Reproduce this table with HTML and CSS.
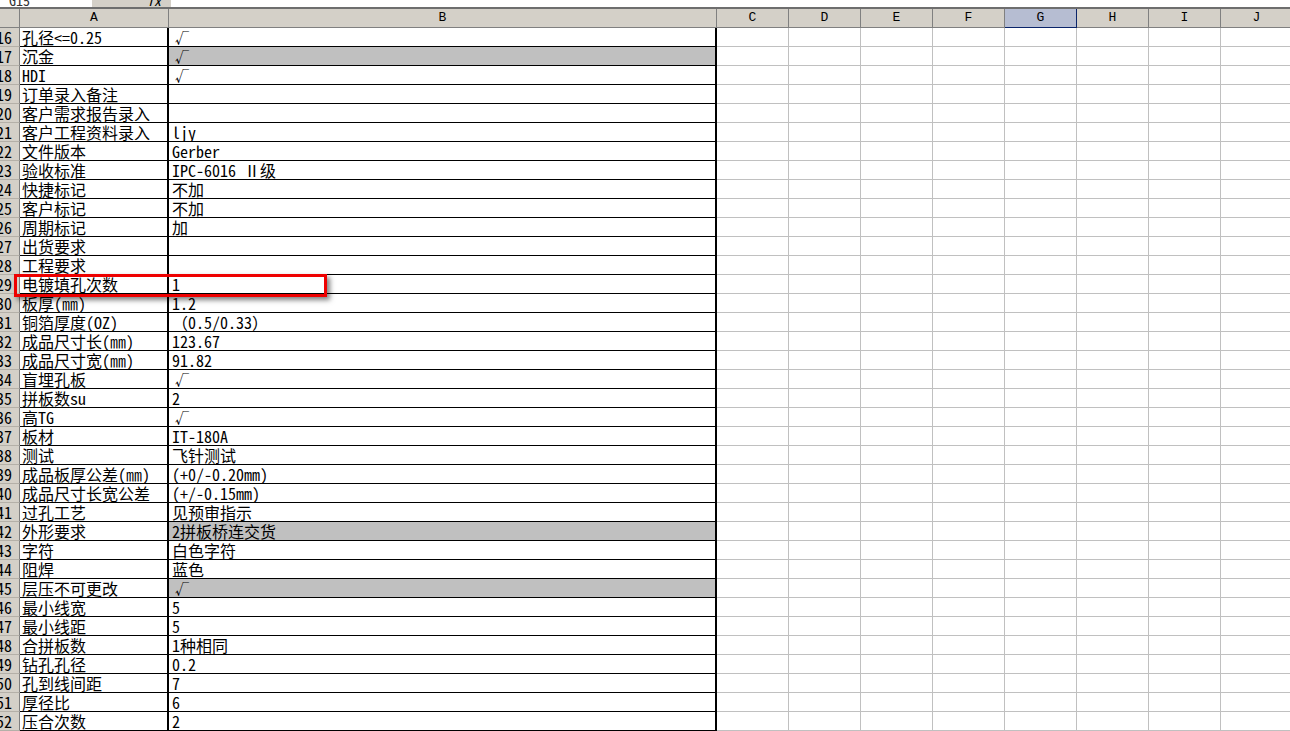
FILE: index.html
```html
<!DOCTYPE html>
<html lang="zh-CN">

<head>
    <meta charset="UTF-8">
    <meta name="viewport" content="width=device-width, initial-scale=1.0">
    <title>Sheet1</title>
    <link rel="stylesheet" href="styles.css">
</head>

<body>
    <div class="formula-bar">
        <div class="formula-bar__name">G15</div>
        <div class="formula-bar__fx">fx</div>
    </div>
    <div class="sheet-wrap">
        <div class="sheet" id="sheet"></div>
        <div class="highlight"></div>
    </div>
    <script>
        const columns = ['A', 'B', 'C', 'D', 'E', 'F', 'G', 'H', 'I', 'J'];
        const selectedColumn = 'G';

        const rows = [
            ['孔径<=0.25', '√'],
            ['沉金', '√', true],
            ['HDI', '√'],
            ['订单录入备注', ''],
            ['客户需求报告录入', ''],
            ['客户工程资料录入', 'ljy'],
            ['文件版本', 'Gerber'],
            ['验收标准', 'IPC-6016 Ⅱ级'],
            ['快捷标记', '不加'],
            ['客户标记', '不加'],
            ['周期标记', '加'],
            ['出货要求', ''],
            ['工程要求', ''],
            ['电镀填孔次数', '1'],
            ['板厚(㎜)', '1.2'],
            ['铜箔厚度(OZ)', '（0.5/0.33）'],
            ['成品尺寸长(㎜)', '123.67'],
            ['成品尺寸宽(㎜)', '91.82'],
            ['盲埋孔板', '√'],
            ['拼板数su', '2'],
            ['高TG', '√'],
            ['板材', 'IT-180A'],
            ['测试', '飞针测试'],
            ['成品板厚公差(㎜)', '(+0/-0.20mm)'],
            ['成品尺寸长宽公差', '(+/-0.15mm)'],
            ['过孔工艺', '见预审指示'],
            ['外形要求', '2拼板桥连交货', true],
            ['字符', '白色字符'],
            ['阻焊', '蓝色'],
            ['层压不可更改', '√', true],
            ['最小线宽', '5'],
            ['最小线距', '5'],
            ['合拼板数', '1种相同'],
            ['钻孔孔径', '0.2'],
            ['孔到线间距', '7'],
            ['厚径比', '6'],
            ['压合次数', '2']
        ];

        function cell(className, text) {
            const div = document.createElement('div');
            div.className = className;
            if (text) div.textContent = text;
            return div;
        }

        const sheet = document.getElementById('sheet');

        sheet.appendChild(cell('col-head col-head--corner'));
        columns.forEach(name => {
            const cls = name === selectedColumn ? 'col-head col-head--selected' : 'col-head';
            sheet.appendChild(cell(cls, name));
        });

        rows.forEach((row, i) => {
            const [label, value, filled] = row;
            const head = cell('row-head');
            head.appendChild(cell('row-head__num', String(16 + i)));
            sheet.appendChild(head);
            sheet.appendChild(cell('data data--a', label));
            const b = cell(filled ? 'data data--b data--filled' : 'data data--b', value);
            if (value === '√') b.classList.add('data--check');
            sheet.appendChild(b);
            for (let c = 2; c < columns.length; c++) {
                sheet.appendChild(cell('grid'));
            }
        });
    </script>
</body>

</html>
```

FILE: styles.css
```css
:root {
    --face-color: #d4d0c8;
    --head-border: #808080;
    --grid-color: #c0c0c0;
    --fill-color: #c0c0c0;
    --select-bg: #b6bdd2;
    --select-border: #0a246a;
    --mark-color: #ee0000;
}

body {
    margin: 0;
    background: #fff;
    color: #000;
    font-family: "Noto Sans Mono CJK SC", "Noto Sans CJK SC", "Liberation Mono", monospace;
    overflow: hidden;
    width: 1290px;
    height: 731px;
}

.formula-bar {
    height: 7px;
    border-bottom: 2px solid #6e6e6e;
    display: flex;
    overflow: hidden;
    font-size: 14px;
}

.formula-bar__name {
    width: 92px;
    padding-left: 9px;
    box-sizing: border-box;
    line-height: 0;
    color: #333;
}

.formula-bar__fx {
    width: 79px;
    background: var(--face-color);
    text-align: right;
    padding-right: 10px;
    box-sizing: border-box;
    line-height: 0;
    font-style: italic;
}

.sheet-wrap {
    position: relative;
}

.sheet {
    display: grid;
    grid-template-columns: 20px 149px 548px repeat(8, 72px);
    grid-auto-rows: 19px;
}

.sheet > div {
    box-sizing: border-box;
    overflow: hidden;
    white-space: nowrap;
}

.col-head {
    background: var(--face-color);
    border-right: 1px solid var(--head-border);
    border-bottom: 1px solid var(--head-border);
    font-family: "Liberation Mono", monospace;
    font-size: 13px;
    line-height: 18px;
    text-align: center;
}

.col-head--selected {
    background: var(--select-bg);
    border-right-color: var(--select-border);
    border-bottom-color: var(--select-border);
}

.row-head {
    background: var(--face-color);
    border-right: 1px solid var(--head-border);
    border-bottom: 1px solid #b4b0a8;
    display: flex;
    justify-content: flex-end;
    padding-right: 7px;
}

.row-head__num {
    font-size: 16px;
    line-height: 18px;
    flex-shrink: 0;
}

.data {
    border-bottom: 1px solid #000;
    border-right: 2px solid #000;
    font-size: 16px;
    line-height: 18px;
    padding-left: 2px;
}

.data--b {
    padding-left: 3px;
}

.data--filled {
    background: var(--fill-color);
}

.data--check {
    padding-left: 6px;
    font-size: 14px;
}

.grid {
    border-right: 1px solid var(--grid-color);
    border-bottom: 1px solid var(--grid-color);
}

.highlight {
    position: absolute;
    left: 14px;
    top: 265px;
    width: 313px;
    height: 23px;
    box-sizing: border-box;
    border: 3px solid var(--mark-color);
    box-shadow: 3px 3px 5px rgba(0, 0, 0, 0.5);
}
```
